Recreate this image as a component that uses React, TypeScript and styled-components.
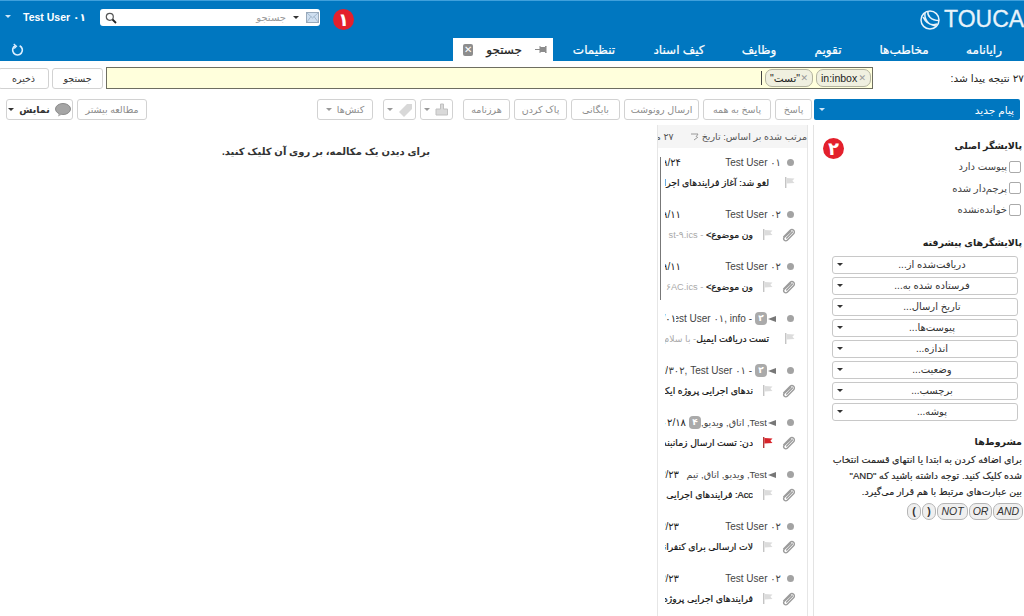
import React from "react";
import styled, { createGlobalStyle } from "styled-components";

const Global = createGlobalStyle`
  html, body { margin: 0; padding: 0; background: #fff; overflow: hidden; }
  body { font-family: "Liberation Sans", "DejaVu Sans", sans-serif; font-size: 10px; color: #333; }
  * { box-sizing: border-box; }
  svg { flex: none; }
`;

const Page = styled.div`
  position: relative; width: 1024px; height: 616px; overflow: hidden; background: #fff; direction: rtl;
`;
const Blue = styled.header`
  background: #0077c0; border-top: 1px solid #3fa0dc; height: 61px; display: flex; flex-direction: column;
`;
const TopRow = styled.div`
  height: 37px; display: flex; align-items: center; padding-bottom: 4px; overflow: hidden;
`;
const Logo = styled.div`
  display: flex; align-items: center; gap: 3px; width: 104px; margin-left: auto; justify-content: flex-end; direction: ltr; color: #e8f3fa;
  padding-top: 4px; overflow: hidden; flex: none;
`;
const LogoText = styled.span`
  font-size: 23px; line-height: 1; flex: none; width: 80px; white-space: nowrap; -webkit-text-stroke: .3px #e8f3fa;
`;
const UserMenu = styled.div`
  direction: ltr; order: -1; display: flex; align-items: center; gap: 12px; color: #fff; font-weight: bold; font-size: 10.5px; padding: 0 0 2px 5px; width: 100px; flex: none;
`;
const SearchBox = styled.div`
  direction: ltr; width: 220px; height: 17px; background: #fff; border-radius: 3px; display: flex; align-items: center; padding: 0 1px 0 5px; flex: none; color: #999;
`;
const SearchLabel = styled.span`
  margin-left: auto; direction: rtl; font-size: 10px; color: #9a9a9a;
`;
const Caret = styled.i<{ $c?: string; $s?: number }>`
  display: inline-block; flex: none; width: 0; height: 0;
  border-left: ${p => p.$s ?? 3}px solid transparent; border-right: ${p => p.$s ?? 3}px solid transparent;
  border-top: ${p => p.$s ?? 3}px solid ${p => p.$c ?? "#333"};
`;
const SearchCaret = styled(Caret)`
  margin: 0 7px;
`;
const LeftGroup = styled.div`
  display: flex; align-items: center; margin-right: auto; direction: ltr; flex: none;
`;
const TabRow = styled.nav`
  height: 23px; display: flex; align-items: stretch;
`;
const Tab = styled.div<{ $w: number }>`
  width: ${p => p.$w}px; flex: none; display: flex; align-items: center; justify-content: center; color: #fff; font-size: 12px; -webkit-text-stroke: .2px #fff;
`;
const ActiveTab = styled.div`
  width: 100px; flex: none; background: #fff; display: flex; align-items: center; gap: 13px; padding: 0 5px 0 10px; margin-right: 3px; color: #222; font-size: 12px; -webkit-text-stroke: .2px #222;
`;
const CloseBox = styled.span`
  width: 13px; height: 12px; background: #8d8d8d; border-radius: 2px; margin-right: auto; color: #fff; font-size: 10px; line-height: 12px; text-align: center; -webkit-text-stroke: 0;
`;
const RefreshSlot = styled.div`
  margin-right: auto; display: flex; align-items: center; padding-left: 11px;
`;
const SearchRow = styled.div`
  display: flex; align-items: center; height: 22px; margin-top: 6px;
`;
const ResultText = styled.div`
  width: 151px; flex: none; font-size: 10.5px; color: #222; white-space: nowrap; overflow: hidden;
`;
const QueryInput = styled.div`
  width: 767px; height: 22px; flex: none; background: #ffffdc; border: 1px solid #6e6e60; display: flex; align-items: center; gap: 3px; padding: 0 1px;
`;
const Chip = styled.span<{ $w: number }>`
  width: ${p => p.$w}px; height: 18px; flex: none; display: flex; align-items: center; justify-content: space-between; padding: 0 4px; border: 1px solid #b4b4a0; border-radius: 7px; background: #f0f0e0; color: #222; font-size: 10.5px;
`;
const ChipX = styled.b`
  color: #999; font-weight: normal; font-size: 9px;
`;
const Cursor = styled.span`
  width: 1px; height: 14px; background: #444; flex: none;
`;
const RowButtons = styled.div`
  display: flex; gap: 3px; margin-right: 3px; flex: none;
`;
const Btn = styled.button<{ $w: number; $dim?: boolean; $strong?: boolean }>`
  width: ${p => p.$w}px; flex: none; height: 21px; padding: 0 2px; border: 1px solid #d2d2d2; border-radius: 3px; background: #fff; font: inherit; font-size: 9.5px;
  color: ${p => (p.$dim ? "#8c8c8c" : "#333")}; display: flex; align-items: center; justify-content: center; gap: 5px; white-space: nowrap;
  font-weight: ${p => (p.$strong ? "bold" : "normal")};
`;
const Toolbar = styled.div`
  display: flex; align-items: center; gap: 4px; height: 21px; margin-top: 10px; padding-right: 4px;
`;
const NewMessage = styled.div`
  width: 206px; height: 21px; flex: none; background: #0077c0; border-radius: 2px; color: #fff; font-size: 10.5px; display: flex; align-items: center; justify-content: space-between; padding: 0 6px 0 5px; margin-left: -2px;
`;
const Spacer = styled.div<{ $w: number }>`
  width: ${p => p.$w}px; flex: none;
`;
const Body = styled.div`
  display: grid; grid-template-columns: 211px 5px 151px 5px 652px; height: 491px; margin-top: 5px;
`;
const Sidebar = styled.aside`
  padding: 0 2px 0 6px; border-left: 1px solid #e3e3e3; overflow: hidden;
`;
const SideTitle = styled.h3<{ $mt: number }>`
  margin: ${p => p.$mt}px 0 0; font-size: 9.5px; line-height: 14px; color: #222; font-weight: bold;
`;
const Checks = styled.div`
  margin-top: 3px;
`;
const Check = styled.label`
  display: flex; align-items: center; gap: 2px; height: 21.500px; font-size: 10px; color: #444; padding-right: 1px;
`;
const Box = styled.span`
  width: 12px; height: 12px; border: 1px solid #aaa; border-radius: 2px; background: #fff; flex: none;
`;
const FilterList = styled.div`
  display: flex; flex-direction: column; gap: 3px; margin: 6px 4px 0 0; width: 186px;
`;
const Filter = styled.div`
  position: relative; height: 18px; border: 1px solid #c8c8c8; border-radius: 3px; display: flex; align-items: center; justify-content: center; font-size: 10px; color: #333; padding: 0 0 1px 14px;
`;
const FilterCaret = styled.span`
  position: absolute; left: 4px; top: 6px; display: flex;
`;
const Para = styled.p`
  margin: 3px 0 0; font-size: 9.500px; line-height: 16px; color: #222; width: 200px; -webkit-text-stroke: .15px #222;
`;
const OpRow = styled.div`
  display: flex; gap: 1px; margin: 3px -1px 0 0; direction: ltr; justify-content: flex-end;
`;
const Op = styled.span<{ $w: number; $i?: boolean }>`
  width: ${p => p.$w}px; height: 17px; border: 1px solid #b5b5b5; border-radius: 7px; background: #efefef; color: #333; display: flex; align-items: center; justify-content: center; font-size: 10.5px;
  font-style: ${p => (p.$i ? "italic" : "normal")}; font-weight: ${p => (p.$i ? "normal" : "bold")};
`;
const Splitter = styled.div`
  display: flex; align-items: center; justify-content: center;
`;
const Grip = styled.div`
  width: 3px; height: 12px; background-image: radial-gradient(#888 45%, transparent 50%); background-size: 2px 2px;
`;
const ListPane = styled.section`
  border-left: 1px solid #e6e6e6; border-right: 1px solid #e6e6e6; overflow: hidden; display: flex; flex-direction: column;
`;
const ListHead = styled.div`
  height: 23px; background: #f5f5f5; display: flex; align-items: center; gap: 3px; font-size: 9.500px; color: #555; white-space: nowrap; overflow: hidden; flex: none;
`;
const HeadCount = styled.span`
  margin-right: 13px;
`;
const Messages = styled.div`
  position: relative; padding: 7px 10px 0 7px; flex: 1;
`;
const ThreadBar = styled.div`
  position: absolute; left: 2px; top: 9px; width: 1px; height: 143px; background: #777;
`;
const Msg = styled.article`
  height: 52px; display: flex; flex-direction: column; gap: 5px; overflow: hidden;
`;
const Line = styled.div`
  height: 15px; display: flex; align-items: center; font-size: 10px; overflow: hidden;
`;
const Dot = styled.span`
  width: 7px; height: 7px; background: #a3a3a3; border-radius: 50%; flex: none; margin-right: 3px;
`;
const Sender = styled.span<{ $gap?: number; $rtl?: boolean }>`
  flex: 1 1 0; min-width: 0; direction: ${p => (p.$rtl ? "rtl" : "ltr")}; display: flex; justify-content: ${p => (p.$rtl ? "flex-start" : "flex-end")}; overflow: hidden; white-space: nowrap; color: #444; margin-right: ${p => p.$gap ?? 6}px;
  font-size: ${p => (p.$rtl ? 9.5 : 10)}px;
`;
const Arrow = styled.span`
  flex: none; width: 0; height: 0; border-top: 3.500px solid transparent; border-bottom: 3.500px solid transparent; border-right: 8px solid #777; margin-right: 11px; margin-left: 1px;
`;
const Badge = styled.span`
  flex: none; width: 12px; height: 13px; background: #aaa; color: #fff; border-radius: 4px; font-size: 9px; text-align: center; line-height: 13px; font-weight: bold;
`;
const DateText = styled.span<{ $w: number; $gap?: number }>`
  flex: none; width: ${p => p.$w}px; margin-right: ${p => p.$gap ?? 0}px; direction: ltr; display: flex; justify-content: flex-end; overflow: hidden; white-space: nowrap; color: #222;
`;
const IconSlot = styled.span<{ $w: number }>`
  flex: none; width: ${p => p.$w}px; display: flex; justify-content: center; align-items: center;
`;
const Subject = styled.div<{ $pr?: number }>`
  flex: 1 1 0; min-width: 0; overflow: hidden; white-space: nowrap; color: #111; font-size: 9.250px; -webkit-text-stroke: .2px #111; padding-right: ${p => p.$pr ?? 0}px;
`;
const Preview = styled.span`
  color: #aaa; -webkit-text-stroke: 0;
`;
const Reading = styled.main`
  text-align: center; padding: 21px 0 0; font-size: 10px; font-weight: bold; color: #333;
`;
const Marker = styled.span<{ $x: number; $y: number }>`
  position: absolute; left: ${p => p.$x}px; top: ${p => p.$y}px; width: 21px; height: 21px; border-radius: 50%; background: #e3202c; color: #fff; font-size: 18px; font-weight: bold; display: flex; align-items: center; justify-content: center; line-height: 1;
`;

const Flag = ({ red }: { red?: boolean }) => (
  <svg width="11" height="11" viewBox="0 0 11 11" aria-hidden>
    <rect x="1" y="0" width="1.4" height="11" fill={red ? "#b23a3a" : "#c4c4c4"} />
    <path d="M2.4 1 L10.5 1.6 L8.4 3.8 L10.5 6 L2.4 6.6 Z" fill={red ? "#d8232a" : "#dcdcdc"} />
  </svg>
);
const Clip = () => (
  <svg width="14" height="14" viewBox="0 0 24 24" fill="none" stroke="#9c9c9c" strokeWidth="2.4" strokeLinecap="round" aria-hidden>
    <path d="M3 15 14 4a4.200 4.200 0 0 1 6 6L9 21a3.500 3.500 0 0 1-5-5L15 6" />
    <path d="M8 17 18 7" />
  </svg>
);
const Mag = () => (
  <svg width="12" height="12" viewBox="0 0 12 12" fill="none" aria-hidden>
    <circle cx="4.8" cy="4.8" r="3.5" stroke="#555" strokeWidth="1.2" />
    <path d="M7.5 7.5 11 11" stroke="#222" strokeWidth="1.8" />
  </svg>
);
const Mail = () => (
  <svg width="13" height="11" viewBox="0 0 13 11" aria-hidden>
    <rect x=".5" y=".5" width="12" height="10" fill="#cfdff0" stroke="#9ab" />
    <path d="M.5.5 6.5 6 12.5.5M.5 10.5l4.5-6M12.5 10.5 8 4.5" fill="none" stroke="#8fa6bd" strokeWidth=".7" />
  </svg>
);
const Globe = () => (
  <svg width="22" height="22" viewBox="0 0 22 22" fill="none" stroke="#e8f3fa" strokeWidth="1.5" aria-hidden>
    <circle cx="11" cy="11" r="9" />
    <path d="M6 4c-1 6 3 12 11 13M4 8c3 6 8 9 14 7M9 2.500c-1 4 3 9 11 9" />
  </svg>
);
const Refresh = () => (
  <svg width="13" height="13" viewBox="0 0 24 24" fill="none" stroke="#dcefff" strokeWidth="3" aria-hidden>
    <path d="M8 5a9 9 0 1 0 8 0" />
    <path d="M5 2 10 6 6 10" strokeWidth="2.4" />
  </svg>
);
const Pin = () => (
  <svg width="13" height="9" viewBox="0 0 13 9" aria-hidden>
    <path d="M0 4.500h5M5 1v7M5 2.500h5l1 -1.500v7l-1-1.500H5" fill="#8b8b8b" stroke="#8b8b8b" />
  </svg>
);
const TagIcon = () => (
  <svg width="15" height="14" viewBox="0 0 15 14" aria-hidden>
    <path d="M1 9 9 1h5v5l-8 8Z" fill="#d8d8d8" />
  </svg>
);
const Stamp = () => (
  <svg width="14" height="13" viewBox="0 0 14 13" aria-hidden>
    <path d="M5.500 1h3v5h4v6H1V6h4.500Z" fill="#d9d9d9" stroke="#c0c0c0" />
  </svg>
);
const Bubble = () => (
  <svg width="16" height="14" viewBox="0 0 16 14" aria-hidden>
    <ellipse cx="8" cy="6" rx="7.500" ry="5.500" fill="#a5a5a5" stroke="#8a8a8a" />
    <path d="M4 10 3 13.500 8 11" fill="#a5a5a5" />
  </svg>
);
const SortIcon = () => (
  <svg width="9" height="9" viewBox="0 0 9 9" fill="none" stroke="#999" aria-hidden>
    <path d="M1 2h7L6 5M4 8 8 5" />
  </svg>
);

const tabs: [string, number][] = [
  ["رایانامه", 80], ["مخاطب‌ها", 80], ["تقویم", 72], ["وظایف", 66], ["کیف اسناد", 94], ["تنظیمات", 76],
];
const filters = ["دریافت‌شده از...", "فرستاده شده به...", "تاریخ ارسال...", "پیوست‌ها...", "اندازه...", "وضعیت...", "برچسب...", "پوشه..."];

export default function App() {
  return (
    <Page>
      <Global />
      <Blue>
        <TopRow>
          <Logo>
            <Globe />
            <LogoText>TOUCAN</LogoText>
          </Logo>
          <LeftGroup>
            <SearchBox>
              <Mag />
              <SearchLabel>جستجو</SearchLabel>
              <SearchCaret $s={3} />
              <Mail />
            </SearchBox>
            <UserMenu>
              <Caret $c="#cfe6f7" />
              <span>Test User ۰۱</span>
            </UserMenu>
          </LeftGroup>
        </TopRow>
        <TabRow>
          {tabs.map(([t, w]) => (
            <Tab key={t} $w={w}>{t}</Tab>
          ))}
          <ActiveTab>
            <Pin />
            <span>جستجو</span>
            <CloseBox>✕</CloseBox>
          </ActiveTab>
          <RefreshSlot><Refresh /></RefreshSlot>
        </TabRow>
      </Blue>
      <SearchRow>
        <ResultText>۲۷ نتیجه پیدا شد:</ResultText>
        <QueryInput>
          <Chip $w={55} dir="ltr"><span>in:inbox</span><ChipX>✕</ChipX></Chip>
          <Chip $w={48} dir="ltr"><span>"تست"</span><ChipX>✕</ChipX></Chip>
          <Cursor />
        </QueryInput>
        <RowButtons>
          <Btn $w={51}>جستجو</Btn>
          <Btn $w={51}>ذخیره</Btn>
        </RowButtons>
      </SearchRow>
      <Toolbar>
        <NewMessage><span>پیام جدید</span><Caret $c="#cfe6f7" /></NewMessage>
        <Btn $w={37} $dim>پاسخ</Btn>
        <Btn $w={68} $dim>پاسخ به همه</Btn>
        <Btn $w={75} $dim>ارسال رونوشت</Btn>
        <Btn $w={49} $dim>بایگانی</Btn>
        <Btn $w={53} $dim>پاک کردن</Btn>
        <Btn $w={47} $dim>هرزنامه</Btn>
        <Spacer $w={2} />
        <Btn $w={33} $dim dir="ltr"><Caret $c="#999" /><Stamp /></Btn>
        <Btn $w={33} $dim dir="ltr"><Caret $c="#999" /><TagIcon /></Btn>
        <Spacer $w={2} />
        <Btn $w={56} $dim dir="ltr"><Caret $c="#999" /><span>کنش‌ها</span></Btn>
        <Spacer $w={162} />
        <Btn $w={70} $dim>مطالعه بیشتر</Btn>
        <Btn $w={67} $strong><Bubble />نمایش<Caret /></Btn>
      </Toolbar>
      <Body>
        <Sidebar>
          <SideTitle $mt={14}>پالایشگر اصلی</SideTitle>
          <Checks>
            <Check><Box />پیوست دارد</Check>
            <Check><Box />پرچم‌دار شده</Check>
            <Check><Box />خوانده‌نشده</Check>
          </Checks>
          <SideTitle $mt={15}>پالایشگرهای پیشرفته</SideTitle>
          <FilterList>
            {filters.map(f => (
              <Filter key={f}>{f}<FilterCaret><Caret /></FilterCaret></Filter>
            ))}
          </FilterList>
          <SideTitle $mt={14}>مشروط‌ها</SideTitle>
          <Para>برای اضافه کردن به ابتدا یا انتهای قسمت انتخاب<br />شده کلیک کنید. توجه داشته باشید که "AND"<br />بین عبارت‌های مرتبط با هم قرار می‌گیرد.</Para>
          <OpRow>
            <Op $w={14}>(</Op>
            <Op $w={14}>)</Op>
            <Op $w={31} $i>NOT</Op>
            <Op $w={23} $i>OR</Op>
            <Op $w={30} $i>AND</Op>
          </OpRow>
        </Sidebar>
        <Splitter><Grip /></Splitter>
        <ListPane>
          <ListHead>
            <span>مرتب شده بر اساس: تاریخ</span>
            <SortIcon />
            <HeadCount>۲۷ مکالمه</HeadCount>
          </ListHead>
          <Messages>
            <ThreadBar />
            <Msg>
              <Line><Dot /><Sender>Test User ۰۱</Sender><DateText $w={16}>۱۴۰۳/۰۹/۲۴</DateText></Line>
              <Line><IconSlot $w={16}><Flag /></IconSlot><Subject $pr={12}>لغو شد: آغاز فرایندهای اجرایی</Subject></Line>
            </Msg>
            <Msg>
              <Line><Dot /><Sender>Test User ۰۲</Sender><DateText $w={16}>۱۴۰۳/۰۹/۱۱</DateText></Line>
              <Line><IconSlot $w={16}><Clip /></IconSlot><IconSlot $w={28}><Flag /></IconSlot><Subject>ون موضوع&gt;<Preview> - st-۹.ics</Preview></Subject></Line>
            </Msg>
            <Msg>
              <Line><Dot /><Sender>Test User ۰۲</Sender><DateText $w={16}>۱۴۰۳/۰۹/۱۱</DateText></Line>
              <Line><IconSlot $w={16}><Clip /></IconSlot><IconSlot $w={28}><Flag /></IconSlot><Subject>ون موضوع&gt;<Preview> - ۶AC.ics</Preview></Subject></Line>
            </Msg>
            <Msg>
              <Line><Dot /><Arrow /><Badge>۲</Badge><Sender $gap={3}>Test User ۰۱, info -</Sender><DateText $w={11}>۱۴۰۳/۱/۰۱</DateText></Line>
              <Line><IconSlot $w={16}><Flag /></IconSlot><Subject $pr={12}>تست دریافت ایمیل<Preview>- با سلام</Preview></Subject></Line>
            </Msg>
            <Msg>
              <Line><Dot /><Arrow /><Badge>۲</Badge><Sender $gap={3}>۳۰۲, Test User ۰۱ -</Sender><DateText $w={3}>۱۴۰۳/</DateText></Line>
              <Line><IconSlot $w={16}><Clip /></IconSlot><IconSlot $w={28}><Flag /></IconSlot><Subject>ندهای اجرایی پروژه ایکس</Subject></Line>
            </Msg>
            <Msg>
              <Line><Dot /><Arrow /><Sender $gap={0} $rtl>Test, اتاق, ویدیو,</Sender><Badge>۴</Badge><DateText $w={21} $gap={3}>۱۴۰۳/۰۲/۱۸</DateText></Line>
              <Line><IconSlot $w={16}><Clip /></IconSlot><IconSlot $w={28}><Flag red /></IconSlot><Subject>دن: تست ارسال زمانبندی</Subject></Line>
            </Msg>
            <Msg>
              <Line><Dot /><Arrow /><Sender $gap={0} $rtl>Test, ویدیو, اتاق, تیم</Sender><DateText $w={14}>۱۴۰۳/۲۳</DateText></Line>
              <Line><IconSlot $w={16}><Clip /></IconSlot><IconSlot $w={28}><Flag /></IconSlot><Subject>Acc: فرایندهای اجرایی</Subject></Line>
            </Msg>
            <Msg>
              <Line><Dot /><Sender>Test User ۰۲</Sender><DateText $w={14}>۱۴۰۳/۲۳</DateText></Line>
              <Line><IconSlot $w={16}><Clip /></IconSlot><IconSlot $w={28}><Flag /></IconSlot><Subject>لات ارسالی برای کنفرانس</Subject></Line>
            </Msg>
            <Msg>
              <Line><Dot /><Sender>Test User ۰۲</Sender><DateText $w={14}>۱۴۰۳/۲۳</DateText></Line>
              <Line><IconSlot $w={16}><Clip /></IconSlot><IconSlot $w={28}><Flag /></IconSlot><Subject>فرایندهای اجرایی پروژه</Subject></Line>
            </Msg>
          </Messages>
        </ListPane>
        <Splitter><Grip /></Splitter>
        <Reading>برای دیدن یک مکالمه، بر روی آن کلیک کنید.</Reading>
      </Body>
      <Marker $x={333} $y={9}>۱</Marker>
      <Marker $x={823} $y={138}>۲</Marker>
    </Page>
  );
}
